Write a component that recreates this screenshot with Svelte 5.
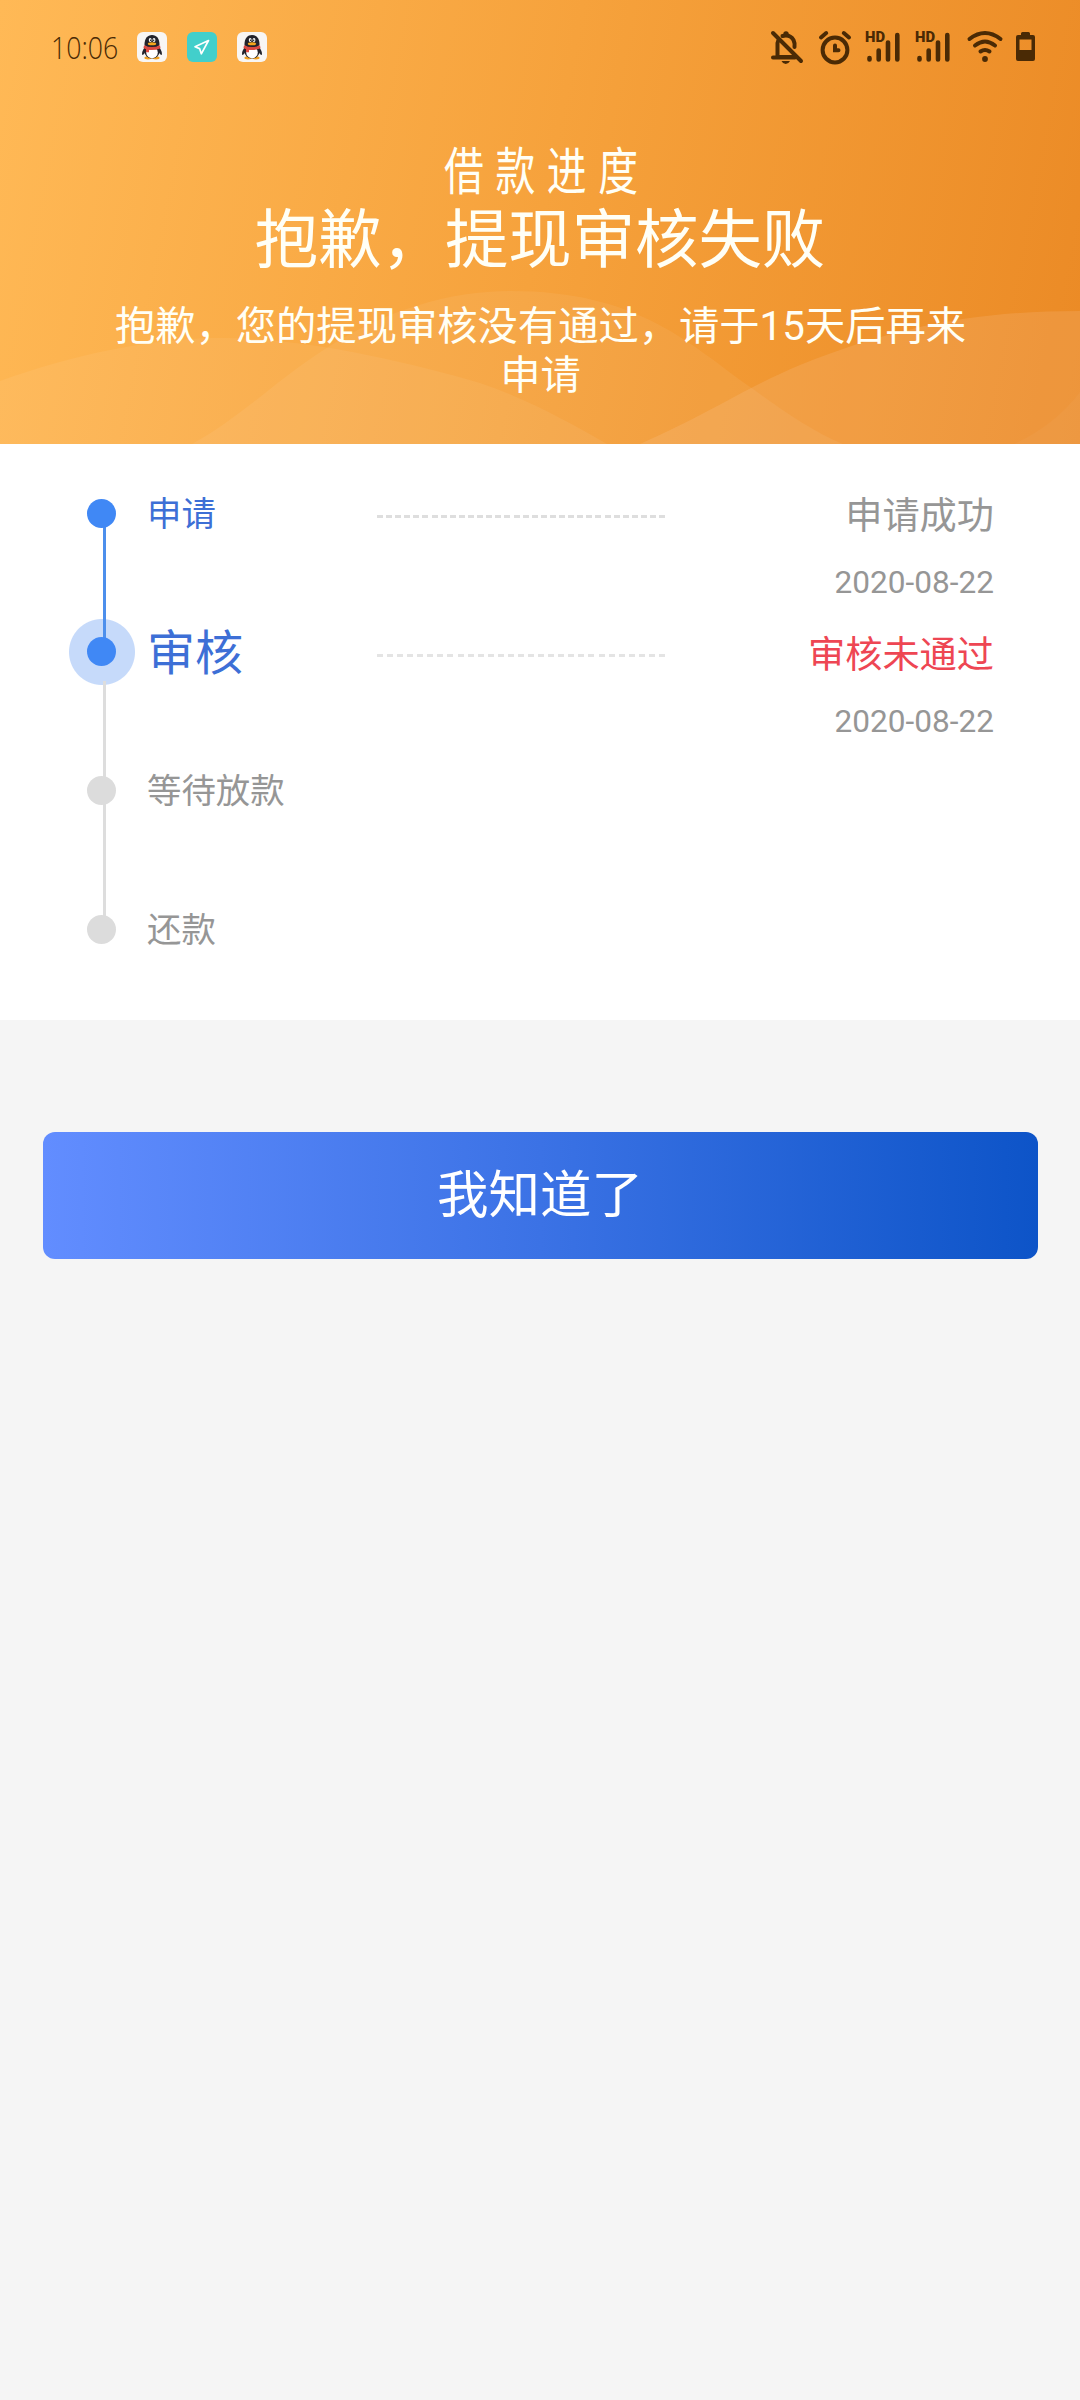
<script>
  const steps = [
    { name: '申请', state: 'done', result: '申请成功', date: '2020-08-22' },
    { name: '审核', state: 'current', result: '审核未通过', date: '2020-08-22', failed: true },
    { name: '等待放款', state: 'todo' },
    { name: '还款', state: 'todo' }
  ];
</script>

{#snippet qq()}
  <svg class="app" viewBox="0 0 30 30">
    <rect width="30" height="30" rx="6" fill="#f8f6f4" />
    <ellipse cx="11" cy="26" rx="3.6" ry="1.4" fill="#f0a020" />
    <ellipse cx="19" cy="26" rx="3.6" ry="1.4" fill="#f0a020" />
    <path d="M8 15C5.500 18 4.500 21 5.300 23C6 23.500 7 22 8 20.500Z M22 15C24.500 18 25.500 21 24.700 23C24 23.500 23 22 22 20.500Z" fill="#23232b" />
    <ellipse cx="15" cy="19.500" rx="7.600" ry="7" fill="#23232b" />
    <ellipse cx="15" cy="20.500" rx="5.800" ry="5.700" fill="#fff" />
    <path d="M7.500 13C7.300 6.500 10.500 3 15 3S22.700 6.500 22.500 13C21 16 9 16 7.500 13Z" fill="#23232b" />
    <ellipse cx="13.200" cy="8" rx="1.400" ry="2.100" fill="#fff" />
    <ellipse cx="17" cy="8" rx="1.400" ry="2.100" fill="#fff" />
    <circle cx="13.600" cy="8.300" r=".7" fill="#111" />
    <circle cx="16.700" cy="8.300" r=".7" fill="#111" />
    <ellipse cx="15" cy="11.800" rx="4.200" ry="1.500" fill="#f4a61c" />
    <path d="M7 13.200Q15 17 23 13.200L23.500 16.200Q18 18.600 12 17.900V20.300H9V17.200L6.500 16Z" fill="#dc4840" />
  </svg>
{/snippet}

{#snippet signal()}
  <svg class="signal" viewBox="0 0 36 34">
    <text x="0" y="12" textLength="20" lengthAdjust="spacingAndGlyphs">HD</text>
    <path d="M4.500 28V29.500M13.700 20.500V29.500M23 12.500V29.500M32.300 5V29.500" />
  </svg>
{/snippet}

<div class="page">
  <header>
    <svg class="waves" viewBox="0 0 1080 174" preserveAspectRatio="none">
      <path d="M0 111C75 84 150 69 215 68C300 67 400 90 480 113C530 130 570 153 607 174H0Z" fill="#fff" fill-opacity=".06" />
      <path d="M192 174C240 148 275 111 325 79C385 40 450 21 510 21C640 21 690 75 753 119C785 142 810 160 843 174Z" fill="#fff" fill-opacity=".06" />
      <path d="M640 174C710 143 745 118 800 95C900 55 980 41 1080 41V174Z" fill="#ffe0d0" fill-opacity=".13" />
      <path d="M1014 174Q1055 155 1080 122V174Z" fill="#fff" fill-opacity=".03" />
    </svg>
    <div class="status">
      <span class="clock">10:06</span>
      <div class="apps">
        {@render qq()}
        <svg class="app" viewBox="0 0 30 30">
          <rect width="30" height="30" rx="6" fill="#42cfcb" />
          <path d="M21.500 8.500L8 14.700L12.600 16.600L14.300 21.800Z" fill="none" stroke="#fff" stroke-width="1.700" stroke-linejoin="round" />
        </svg>
        {@render qq()}
      </div>
      <div class="sys">
        <svg class="bell" viewBox="0 0 32 34">
          <path d="M6.500 27V13Q6.800 11 8 9.500M6.500 27H22M2 27.500H24M11.500 6Q19 4 22.500 10Q24 13 23.500 17" />
          <path d="M2 3L30 31" />
          <circle class="solid" cx="15" cy="4" r="2.700" />
          <path class="solid" d="M10.500 31H19Q17.500 34 14.700 34T10.500 31Z" />
        </svg>
        <svg class="alarm" viewBox="0 0 32 34">
          <circle cx="16" cy="20" r="12.400" />
          <path d="M2 7.500L7.200 3M30 7.500L24.800 3" />
          <path d="M16 15.500V20.300H19.500" />
        </svg>
        {@render signal()}
        {@render signal()}
        <svg class="wifi" viewBox="0 0 36 34">
          <path d="M2.500 9Q18-3 33.500 9M8 15.500Q18 7.500 28 15.500M13.500 21.500Q18 18.500 22.500 21.500" />
          <circle class="solid" cx="18" cy="29" r="2.900" />
        </svg>
        <svg class="battery" viewBox="0 0 20 30">
          <path class="solid" fill-rule="evenodd" d="M5 3V1.500Q5 0 6.500 0H12.500Q14 0 14 1.500V3H17Q19 3 19 5V27Q19 29 17 29H2Q0 29 0 27V5Q0 3 2 3ZM3.500 7.500V18H15.500V7.500Z" />
        </svg>
      </div>
    </div>
    <div class="nav">借款进度</div>
    <h1>抱歉，提现审核失败</h1>
    <p>抱歉，您的提现审核没有通过，请于15天后再来申请</p>
  </header>

  <main>
    {#each steps as step}
      <section class={step.state}>
        <div class="rail"><span class="dot"></span></div>
        <div class="name">{step.name}</div>
        {#if step.result}
          <div class="dash"></div>
          <div class="result">
            <div class="outcome" class:failed={step.failed}>{step.result}</div>
            <div class="date">{step.date}</div>
          </div>
        {/if}
      </section>
    {/each}
  </main>

  <button>我知道了</button>
</div>

<style>
  :global(body) { background: #f5f5f5; }
  .page {
    width: 1080px;
    height: 2400px;
    background: #f5f5f5;
    font-family: Roboto, "Noto Sans CJK SC", sans-serif;
    overflow: hidden;
  }
  header {
    position: relative;
    height: 444px;
    background: linear-gradient(101deg, #ffb956 0%, #f6a23c 50%, #eb8a25 100%);
    color: #fffff6;
    display: flex;
    flex-direction: column;
    align-items: center;
  }
  .waves { position: absolute; left: 0; bottom: 0; width: 1080px; height: 174px; }
  .status {
    width: 100%;
    height: 94px;
    box-sizing: border-box;
    padding: 0 44px 0 51px;
    display: flex;
    align-items: center;
    color: #4a2a05;
    flex: none;
  }
  .clock {
    width: 86px;
    font: 300 31px/36px "Open Sans", Lato, sans-serif;
    transform: scaleX(.86);
    transform-origin: left;
  }
  .apps { display: flex; gap: 20px; }
  .app { width: 30px; height: 30px; }
  .sys { margin-left: auto; display: flex; align-items: center; }
  .sys svg { display: block; fill: none; stroke: #4a2a05; stroke-width: 4; stroke-linecap: round; overflow: visible; }
  .sys .solid { fill: #4a2a05; stroke: none; }
  .bell { width: 32px; height: 34px; }
  .alarm { width: 32px; height: 34px; margin-left: 16px; }
  .signal { width: 36px; height: 34px; margin-left: 14px; }
  .sys .signal path { stroke-width: 4.600; }
  .signal text { font: 900 14px Roboto, sans-serif; fill: #4a2a05; stroke: none; }
  .wifi { width: 36px; height: 34px; margin-left: 16px; }
  .battery { width: 20px; height: 30px; margin-left: 13px; }
  .nav {
    margin-top: 44px;
    font: 400 51px/60px "Noto Sans CJK SC", sans-serif;
    letter-spacing: 14.900px;
    margin-right: -14px;
    transform: scaleX(.78);
  }
  h1 {
    position: relative;
    margin: 5px 0 0;
    font-size: 63.400px;
    font-weight: 400;
    line-height: 74px;
  }
  p {
    position: relative;
    width: 860px;
    margin: 25px 0 0 1px;
    font-size: 40.300px;
    line-height: 49px;
    text-align: center;
  }
  main {
    height: 576px;
    box-sizing: border-box;
    background: #fff;
    padding: 0 86px 0 69px;
  }
  section {
    height: 138.700px;
    display: grid;
    grid-template-columns: 66px 242px 288px 1fr;
    color: #969696;
  }
  .rail {
    position: relative;
    height: 138px;
    display: flex;
    justify-content: center;
    align-items: center;
  }
  .rail::before, .rail::after {
    content: "";
    position: absolute;
    left: 33.500px;
    width: 3px;
    background: #ddd;
  }
  .rail::before { top: 0; height: 69px; }
  .rail::after { top: 69px; height: 70px; }
  section:first-child .rail::before, section:last-child .rail::after { display: none; }
  .done .rail::after, .current .rail::before { background: #4d8fec; }
  .current .rail::after { top: 98px; height: 41px; }
  .current .rail::before { z-index: 1; }
  .dot { position: relative; z-index: 2; width: 29px; height: 29px; margin-right: 1px; border-radius: 50%; background: #dcdcdc; }
  .done .dot { background: #4088f5; }
  .current .dot { background: #4088f5; }
  .current .rail { background: radial-gradient(circle, #c6dafa 32.500px, transparent 33.500px); }
  .name { padding: 1px 0 0 12px; line-height: 138px; font-size: 34.400px; white-space: nowrap; }
  .done .name, .current .name { color: #3d6fd6; }
  .current .name { font-size: 48px; padding-top: 2px; }
  .dash {
    height: 3px;
    margin-top: 71px;
    background: repeating-linear-gradient(90deg, #dedede 0 6px, transparent 6px 9.100px);
  }
  .current .dash { background: repeating-linear-gradient(90deg, #e4e4e4 0 6px, transparent 6px 10.070px); }
  .result { text-align: right; padding-top: 47px; }
  .outcome { font-size: 37.200px; line-height: 50px; }
  .failed { color: #ee4653; }
  .date { font-size: 31.600px; line-height: 36px; margin-top: 24px; }
  button {
    display: block;
    width: 995px;
    height: 127px;
    margin: 112px 0 0 43px;
    border: 0;
    border-radius: 12px;
    background: linear-gradient(90deg, #628dff, #3b72e5 50%, #0d54c8);
    color: #fff;
    font: 400 51.500px/1 Roboto, "Noto Sans CJK SC", sans-serif;
    padding: 0 1px 0 0;
  }
</style>
